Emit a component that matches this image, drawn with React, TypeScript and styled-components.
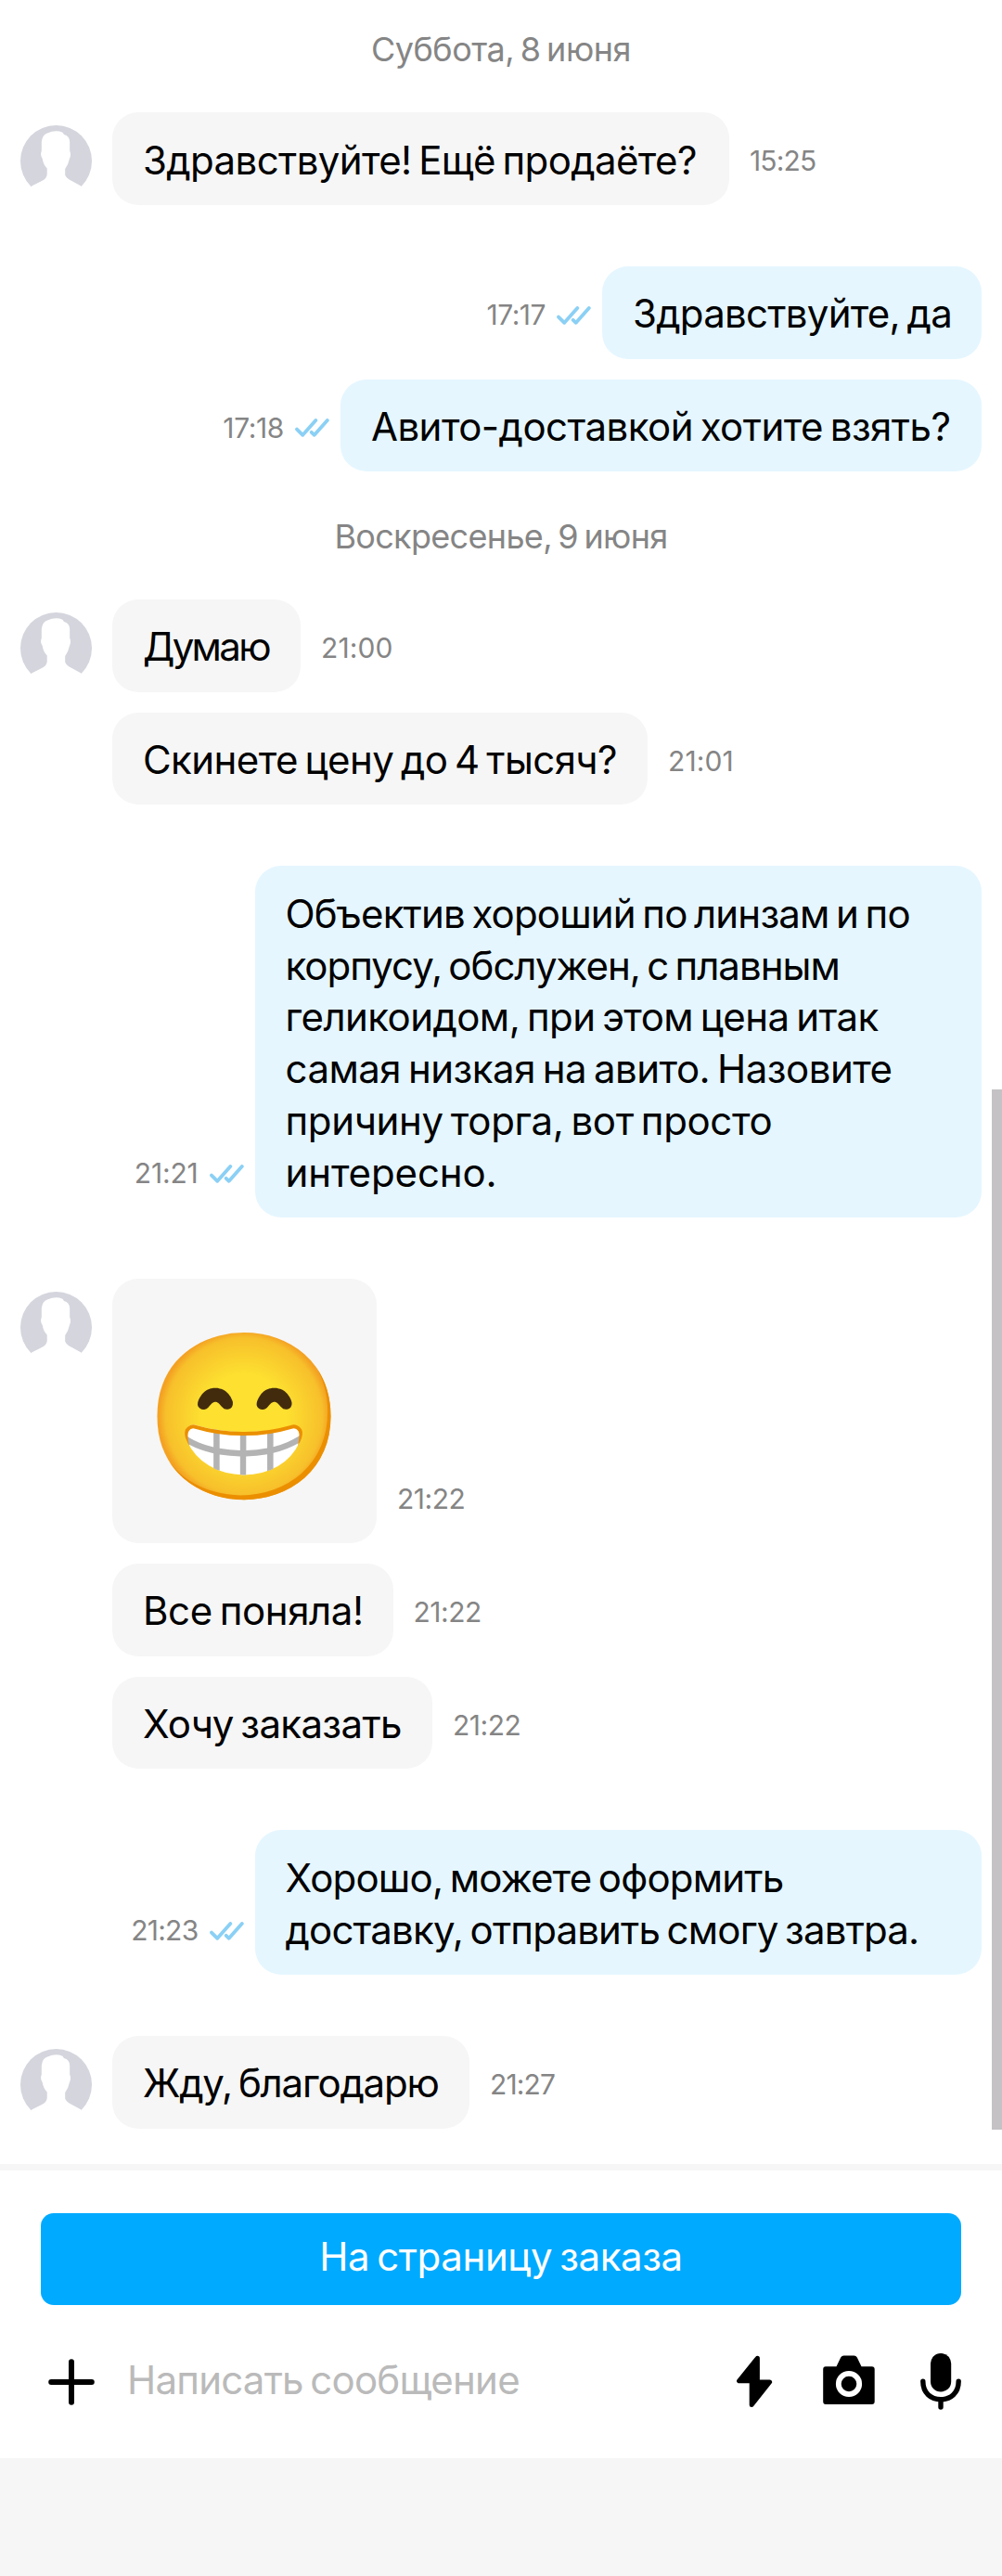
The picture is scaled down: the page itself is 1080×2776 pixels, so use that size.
import styled, { createGlobalStyle } from "styled-components";

const GlobalStyle = createGlobalStyle`
  * {
    box-sizing: border-box;
  }

  body {
    margin: 0;
    background-color: #ffffff;
    font-family: Inter, "Noto Sans", sans-serif;
    color: #000000;
  }
`;

interface TrackTypes {
  $track?: number;
}

const Container = styled.main`
  position: relative;
  width: 1080px;
  height: 2776px;
  display: flex;
  flex-direction: column;
  overflow: hidden;
`;

const Messages = styled.section`
  height: 2332px;
  padding: 29px 22px 0;
  display: flex;
  flex-direction: column;
`;

const DateText = styled.p<TrackTypes>`
  margin: 0 0 44px;
  font-size: 36px;
  line-height: 48px;
  letter-spacing: ${(props) => props.$track ?? 0}px;
  word-spacing: -3px;
  text-align: center;
  color: #858585;
`;

const Group = styled.div<{ $gap: number }>`
  display: flex;
  margin-bottom: ${(props) => props.$gap}px;
`;

const AvatarColumn = styled.div`
  width: 99px;
  flex-shrink: 0;
  padding-top: 13.8px;
`;

const AvatarSvg = styled.svg`
  display: block;
  width: 77px;
  height: 77px;
`;

const BubbleList = styled.div`
  flex: 1;
  display: flex;
  flex-direction: column;
  gap: 22px;
`;

const Row = styled.div<{ $mine?: boolean }>`
  display: flex;
  align-items: flex-end;
  justify-content: ${(props) => (props.$mine ? "flex-end" : "flex-start")};
`;

const Bubble = styled.div<{ $mine?: boolean; $width: number }>`
  width: ${(props) => props.$width}px;
  min-height: 99.8px;
  padding: 23.5px 0 20.6px 33px;
  border-radius: 28px;
  background-color: ${(props) => (props.$mine ? "#e5f6ff" : "#f6f6f6")};
`;

const EmojiBubble = styled.div`
  width: 285px;
  height: 285px;
  padding-top: 15px;
  display: flex;
  align-items: center;
  justify-content: center;
  border-radius: 28px;
  background-color: #f6f6f6;
  font-family: "Noto Color Emoji", sans-serif;
  font-size: 176px;
  line-height: 1;
`;

const Line = styled.span<TrackTypes>`
  display: block;
  font-size: 42px;
  line-height: 55.7px;
  letter-spacing: ${(props) => props.$track ?? 0}px;
  word-spacing: -3.5px;
  white-space: nowrap;
`;

const Time = styled.span<TrackTypes & { $mine?: boolean }>`
  padding-bottom: 29.5px;
  margin: ${(props) => (props.$mine ? "0 12px 0 0" : "0 0 0 22px")};
  font-size: 30px;
  line-height: 36px;
  letter-spacing: ${(props) => props.$track ?? 0}px;
  color: #858585;
`;

const ChecksSvg = styled.svg`
  width: 37px;
  height: 20px;
  margin: 0 12px 37px 0;
  flex-shrink: 0;
`;

const ScrollThumb = styled.div`
  position: absolute;
  top: 1174px;
  right: 0;
  width: 11px;
  height: 1121px;
  background-color: #c4c2c5;
`;

const Composer = styled.footer`
  height: 317px;
  padding-top: 46px;
  border-top: 7px solid #f6f6f6;
`;

const OrderButton = styled.button<TrackTypes>`
  display: block;
  width: 992px;
  height: 99px;
  margin: 0 auto;
  padding: 0 0 6px;
  border: 0;
  border-radius: 14px;
  background-color: #00aaff;
  color: #ffffff;
  font-family: inherit;
  font-size: 42px;
  letter-spacing: ${(props) => props.$track ?? 0}px;
  word-spacing: -3.5px;
`;

const InputRow = styled.div`
  height: 165px;
  padding: 0 44px 0 52px;
  display: flex;
  align-items: center;
`;

const PlusSvg = styled.svg`
  width: 50px;
  height: 50px;
`;

const Placeholder = styled.span<TrackTypes>`
  flex: 1;
  padding: 0 0 4px 35px;
  font-size: 42px;
  letter-spacing: ${(props) => props.$track ?? 0}px;
  word-spacing: -3.5px;
  color: #bababa;
`;

const Actions = styled.div`
  display: flex;
  align-items: center;
`;

const ActionSvg = styled.svg`
  display: block;
  height: 66px;
`;

const BottomInset = styled.div`
  flex: 1;
  background-color: #f6f6f6;
`;

const Avatar = () => (
  <AvatarSvg viewBox="0 0 77 77">
    <circle cx="38.5" cy="38.5" r="38.5" fill="#d4d5dd" />
    <path
      d="M12 65.5 L22 60.5 Q28.5 57.5 28.7 53 L28.7 46.5 Q24.5 42 23.7 36 Q21 32 22.8 27.5 L22.8 18 Q23.5 10 29 8.5 Q38 4.5 45.5 7.8 L47 10 Q53 11.5 53.2 18 L53.2 27.5 Q55 32 52.8 36.5 Q51.5 43 48.2 47 L48.2 53.5 Q49.5 57 54.5 59.5 L65.5 65.5 L65.5 77 L12 77 Z"
      fill="#ffffff"
    />
  </AvatarSvg>
);

const Checks = () => (
  <ChecksSvg
    viewBox="0 0 37 20"
    fill="none"
    stroke="#8bd0f5"
    strokeWidth="3.8"
    strokeLinecap="round"
    strokeLinejoin="round"
  >
    <path d="M2 11.6 L8.3 17.8 L22.3 2" />
    <path d="M17.7 14.8 L20.8 17.8 L34.8 2" />
  </ChecksSvg>
);

interface MessageTypes {
  // each line is [text, letter spacing]
  lines?: [string, number][];
  emoji?: string;
  width?: number;
  time: [string, number];
}

interface GroupTypes {
  mine?: boolean;
  gap: number;
  messages: MessageTypes[];
}

const saturday: GroupTypes[] = [
  {
    gap: 66,
    messages: [
      {
        lines: [["Здравствуйте! Ещё продаёте?", -0.62]],
        width: 665,
        time: ["15:25", -0.84],
      },
    ],
  },
  {
    mine: true,
    gap: 45.5,
    messages: [
      { lines: [["Здравствуйте, да", -0.74]], width: 409, time: ["17:17", -0.5] },
      {
        lines: [["Авито-доставкой хотите взять?", -0.55]],
        width: 691,
        time: ["17:18", -0.38],
      },
    ],
  },
];

const sunday: GroupTypes[] = [
  {
    gap: 66,
    messages: [
      { lines: [["Думаю", -2.7]], width: 203, time: ["21:00", 0.11] },
      { lines: [["Скинете цену до 4 тысяч?", -0.59]], width: 577, time: ["21:01", 0.1] },
    ],
  },
  {
    mine: true,
    gap: 66,
    messages: [
      {
        lines: [
          ["Объектив хороший по линзам и по", -0.83],
          ["корпусу, обслужен, с плавным", -1.01],
          ["геликоидом, при этом цена итак", -0.57],
          ["самая низкая на авито. Назовите", -0.51],
          ["причину торга, вот просто", -0.35],
          ["интересно.", -0.14],
        ],
        width: 783.5,
        time: ["21:21", -0.2],
      },
    ],
  },
  {
    gap: 66,
    messages: [
      { emoji: "😁", time: ["21:22", -0.48] },
      { lines: [["Все поняла!", -0.4]], width: 302.5, time: ["21:22", -0.48] },
      { lines: [["Хочу заказать", -0.66]], width: 345, time: ["21:22", -0.48] },
    ],
  },
  {
    mine: true,
    gap: 66,
    messages: [
      {
        lines: [
          ["Хорошо, можете оформить", -0.81],
          ["доставку, отправить смогу завтра.", -0.83],
        ],
        width: 783.5,
        time: ["21:23", -0.73],
      },
    ],
  },
  {
    gap: 0,
    messages: [
      { lines: [["Жду, благодарю", -1.19]], width: 385, time: ["21:27", -0.86] },
    ],
  },
];

const MessageGroup = ({ mine, gap, messages }: GroupTypes) => (
  <Group $gap={gap}>
    {!mine && (
      <AvatarColumn>
        <Avatar />
      </AvatarColumn>
    )}
    <BubbleList>
      {messages.map((message, i) => {
        const time = (
          <Time $mine={mine} $track={message.time[1]}>
            {message.time[0]}
          </Time>
        );
        return (
          <Row key={i} $mine={mine}>
            {mine && time}
            {mine && <Checks />}
            {message.emoji ? (
              <EmojiBubble>{message.emoji}</EmojiBubble>
            ) : (
              <Bubble $mine={mine} $width={message.width ?? 0}>
                {message.lines?.map(([text, track]) => (
                  <Line key={text} $track={track}>
                    {text}
                  </Line>
                ))}
              </Bubble>
            )}
            {!mine && time}
          </Row>
        );
      })}
    </BubbleList>
  </Group>
);

const App = () => {
  return (
    <Container>
      <GlobalStyle />
      <Messages>
        <DateText $track={-0.5}>Суббота, 8 июня</DateText>
        {saturday.map((group, i) => (
          <MessageGroup key={i} {...group} />
        ))}
        <DateText $track={-0.68}>Воскресенье, 9 июня</DateText>
        {sunday.map((group, i) => (
          <MessageGroup key={i} {...group} />
        ))}
      </Messages>
      <ScrollThumb />
      <Composer>
        <OrderButton $track={-0.4}>На страницу заказа</OrderButton>
        <InputRow>
          <PlusSvg viewBox="0 0 50 50" stroke="#000" strokeWidth="6" strokeLinecap="round">
            <path d="M25 3.2 V46.8 M3.2 25 H46.8" />
          </PlusSvg>
          <Placeholder $track={-0.78}>Написать сообщение</Placeholder>
          <Actions>
            {/* lightning, camera and microphone share one 66px tall strip */}
            <ActionSvg width="243" viewBox="0 0 243 66">
              <path
                d="M23.4 7.2 L3.6 31.8 H17.2 V57.4 L36.6 33 H23.4 Z"
                stroke="#000"
                strokeWidth="5"
                strokeLinejoin="round"
              />
              <path d="M97 16.2 H108.5 L113.2 6.5 Q114.3 4.4 116.5 4.4 H127.5 Q129.7 4.4 130.8 6.5 L135.5 16.2 H146.7 Q149.7 16.2 149.7 19.2 V54 Q149.7 57 146.7 57 H97 Q94.2 57 94.2 54 V19.2 Q94.2 16.2 97 16.2 Z" />
              <circle cx="122" cy="35" r="11.2" stroke="#fff" strokeWidth="5.8" />
              <rect x="210" y="2" width="22.2" height="41.5" rx="11.1" />
              <path
                d="M201.8 32.3 C201.8 45 210.5 51.8 221 51.8 C231.5 51.8 240.2 45 240.2 32.3 M221 52 V60"
                fill="none"
                stroke="#000"
                strokeWidth="5.4"
                strokeLinecap="round"
              />
            </ActionSvg>
          </Actions>
        </InputRow>
      </Composer>
      <BottomInset />
    </Container>
  );
};

export default App;
